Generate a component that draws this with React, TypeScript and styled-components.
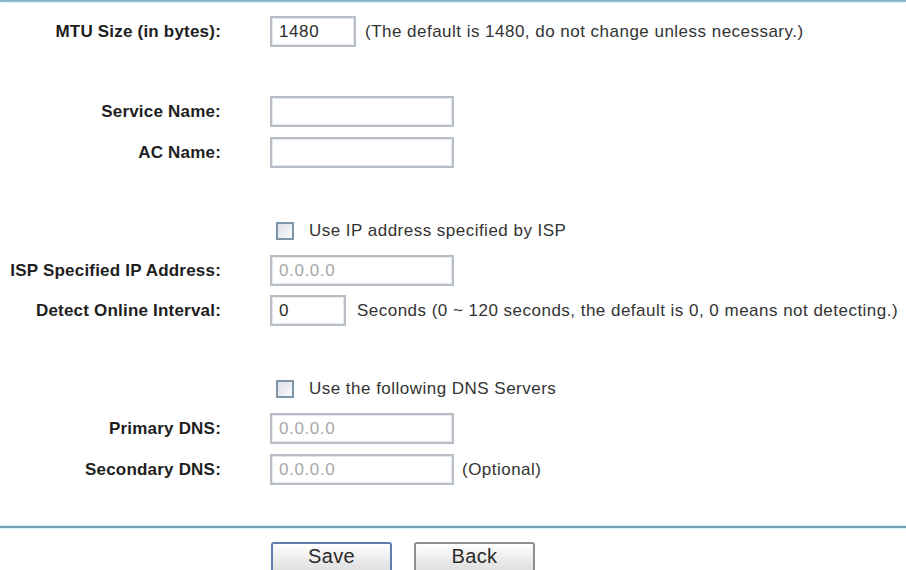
import React from "react";
import styled, { createGlobalStyle } from "styled-components";

const Global = createGlobalStyle`
  html, body { margin: 0; padding: 0; background: #ffffff; }
  body { font-family: "Liberation Sans", Arial, sans-serif; }
`;

const Page = styled.div`
  width: 906px;
  height: 570px;
  overflow: hidden;
  background: #fff;
  display: flex;
  flex-direction: column;
`;

const TopRule = styled.div`
  height: 2px;
  background: linear-gradient(#7fa9c0, #9cc3d6);
  box-shadow: 0 1px 1px #dff3fa;
  flex: none;
`;

const Row = styled.div<{ $top: number; $h: number }>`
  display: grid;
  grid-template-columns: 221px 1fr;
  column-gap: 49px;
  align-items: center;
  margin-top: ${(p) => p.$top}px;
  height: ${(p) => p.$h}px;
  flex: none;
`;

const Label = styled.div`
  text-align: right;
  font-weight: bold;
  font-size: 17px;
  letter-spacing: 0.2px;
  color: #1e1e1e;
  white-space: nowrap;
`;

const Field = styled.div<{ $gap?: number; $indent?: number }>`
  display: flex;
  align-items: center;
  gap: ${(p) => p.$gap ?? 9}px;
  padding-left: ${(p) => p.$indent ?? 0}px;
`;

const Box = styled.div<{ $w: number; $disabled?: boolean }>`
  box-sizing: border-box;
  width: ${(p) => p.$w}px;
  height: 31px;
  border: 2px solid #b7bec6;
  box-shadow: inset 0 0 0 1px #e4e8ec;
  background: #fff;
  display: flex;
  align-items: center;
  padding-left: 7px;
  font-size: 17px;
  letter-spacing: 0.6px;
  color: ${(p) => (p.$disabled ? "#a8a8a8" : "#2a2a2a")};
  flex: none;
`;

const Note = styled.span`
  font-size: 17px;
  color: #333333;
  white-space: nowrap;
  letter-spacing: 0.48px;
`;

const Check = styled.span`
  box-sizing: border-box;
  width: 18px;
  height: 18px;
  border: 2px solid #7d95a8;
  background: linear-gradient(135deg, #dcdfe3, #fbfbfb);
  flex: none;
`;

const Separator = styled.div<{ $top: number }>`
  margin-top: ${(p) => p.$top}px;
  height: 2px;
  background: #6f9fb3;
  box-shadow: 0 -1px 1px #d6f2fa, 0 1px 1px #d6f2fa;
  flex: none;
`;

const Buttons = styled.div`
  margin-top: 14px;
  display: flex;
  gap: 22px;
  padding-left: 271px;
  flex: none;
`;

const Button = styled.button<{ $primary?: boolean }>`
  box-sizing: border-box;
  width: 121px;
  height: 34px;
  border: 2px solid ${(p) => (p.$primary ? "#5a7fb0" : "#8a8f96")};
  border-radius: 3px;
  background: linear-gradient(#ffffff, #ececec 50%, #dcdcdc);
  font-family: "Liberation Sans", Arial, sans-serif;
  font-size: 20px;
  letter-spacing: 0.4px;
  color: #2a2a2a;
  display: flex;
  align-items: flex-start;
  justify-content: center;
  padding: 1px 0 0;
`;

export default function App() {
  return (
    <Page>
      <Global />
      <TopRule />
      <Row $top={14} $h={30}>
        <Label>MTU Size (in bytes):</Label>
        <Field>
          <Box $w={86}>1480</Box>
          <Note>(The default is 1480, do not change unless necessary.)</Note>
        </Field>
      </Row>
      <Row $top={50} $h={31}>
        <Label>Service Name:</Label>
        <Field>
          <Box $w={184} />
        </Field>
      </Row>
      <Row $top={10} $h={31}>
        <Label>AC Name:</Label>
        <Field>
          <Box $w={184} />
        </Field>
      </Row>
      <Row $top={53} $h={20}>
        <span />
        <Field $gap={15} $indent={6}>
          <Check />
          <Note>Use IP address specified by ISP</Note>
        </Field>
      </Row>
      <Row $top={14} $h={31}>
        <Label>ISP Specified IP Address:</Label>
        <Field>
          <Box $w={184} $disabled>0.0.0.0</Box>
        </Field>
      </Row>
      <Row $top={9} $h={31}>
        <Label>Detect Online Interval:</Label>
        <Field $gap={11}>
          <Box $w={76}>0</Box>
          <Note>Seconds (0 ~ 120 seconds, the default is 0, 0 means not detecting.)</Note>
        </Field>
      </Row>
      <Row $top={53} $h={20}>
        <span />
        <Field $gap={15} $indent={6}>
          <Check />
          <Note>Use the following DNS Servers</Note>
        </Field>
      </Row>
      <Row $top={14} $h={31}>
        <Label>Primary DNS:</Label>
        <Field>
          <Box $w={184} $disabled>0.0.0.0</Box>
        </Field>
      </Row>
      <Row $top={10} $h={31}>
        <Label>Secondary DNS:</Label>
        <Field $gap={8}>
          <Box $w={184} $disabled>0.0.0.0</Box>
          <Note>(Optional)</Note>
        </Field>
      </Row>
      <Separator $top={41} />
      <Buttons>
        <Button $primary>Save</Button>
        <Button>Back</Button>
      </Buttons>
    </Page>
  );
}
